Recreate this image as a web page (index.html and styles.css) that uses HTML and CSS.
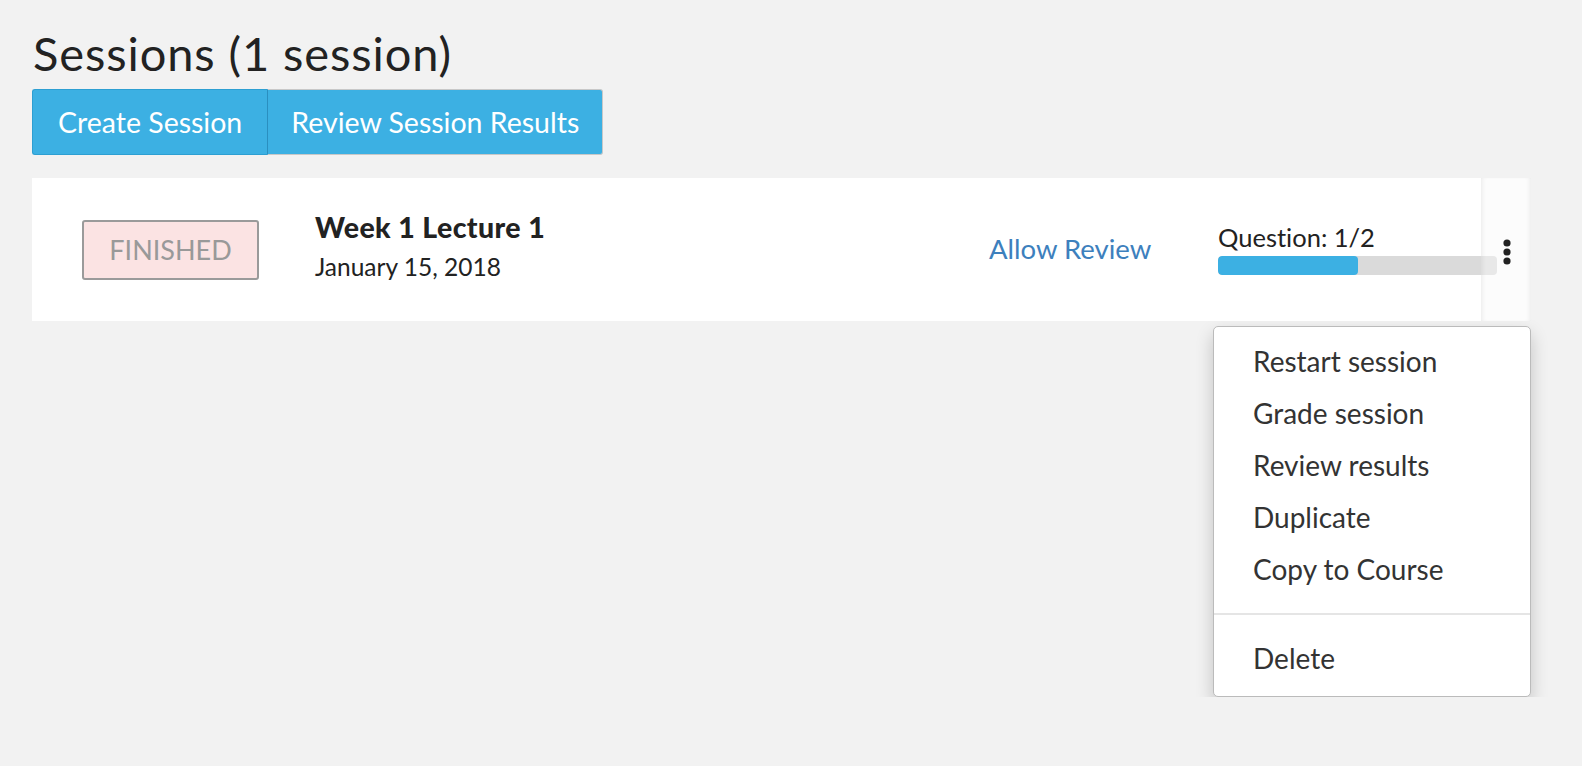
FILE: index.html
```html
<!DOCTYPE html>
<html>
<head>
<meta charset="utf-8">
<link rel="stylesheet" href="styles.css">
</head>
<body>
<div class="page">
  <h1 class="title">Sessions (1 session)</h1>
  <div class="btn-group">
    <button class="btn">Create Session</button>
    <button class="btn">Review Session Results</button>
  </div>
  <div class="card">
    <div class="status-col"><span class="badge">FINISHED</span></div>
    <div class="info">
      <div class="name">Week 1 Lecture 1</div>
      <div class="date">January 15, 2018</div>
    </div>
    <div class="review-col"><a class="review-link">Allow Review</a></div>
    <div class="progress-col">
      <div class="q">Question: 1/2</div>
      <div class="bar"><div class="fill" style="width:50%"></div></div>
    </div>
    <div class="kebab-col">
      <svg width="10" height="28" viewBox="0 0 10 28"><circle cx="5" cy="5" r="3.6" fill="#222"/><circle cx="5" cy="14" r="3.6" fill="#222"/><circle cx="5" cy="23" r="3.6" fill="#222"/></svg>
    </div>
  </div>
  <div class="options-row">
    <div class="options">
      <div class="opt">Restart session</div>
      <div class="opt">Grade session</div>
      <div class="opt">Review results</div>
      <div class="opt">Duplicate</div>
      <div class="opt">Copy to Course</div>
      <div class="sep"></div>
      <div class="opt">Delete</div>
    </div>
  </div>
</div>
</body>
</html>
```
FILE: styles.css
```css
* { box-sizing: border-box; }
html, body { margin: 0; padding: 0; background: #f2f2f2; }
body { font-family: Lato, "Noto Sans", sans-serif; color: #222; font-variant-ligatures: none; }
.page { padding: 24px 0 0 32px; width: 1582px; }
.title { font-size: 47px; font-weight: 400; margin: 0 0 0 1px; line-height: 58px; color: #222; letter-spacing: 0.9px; }
.btn-group { display: flex; margin-top: 7px; }
.btn {
  font-family: inherit; font-size: 28.5px; color: #fff; background: #3cb0e3;
  border: 1px solid #2d9fd2; height: 66px; padding: 0 25px 0 25px; cursor: pointer;
  font-variant-ligatures: none;
}
.btn:first-child { border-radius: 3px 0 0 3px; border-right: 1px solid #2a8fc0; }
.btn:last-child { border-radius: 0 3px 3px 0; border-left: 0; border-color: #c8c8c8; padding: 0 23px 0 23px; }
.card {
  position: relative; margin-top: 23px; background: #fff; height: 143px;
  display: flex; align-items: center; width: 1499px;
}
.status-col { width: 283px; padding-left: 50px; flex-shrink: 0; }
.badge {
  display: block; width: 177px; height: 60px; line-height: 56px; text-align: center;
  background: #fbe3e3; border: 2px solid #9a9a9a; border-radius: 3px; color: #999; font-size: 27px;
}
.info { flex: 1; }
.name { font-weight: 900; font-size: 28.5px; line-height: 32px; margin-top: -7px; letter-spacing: 0.4px; }
.date { font-size: 24.5px; line-height: 30px; margin-top: 9px; }
.review-col { width: 229px; flex-shrink: 0; padding-bottom: 3px; }
.review-link { color: #3d80bd; font-size: 27.5px; }
.progress-col { width: 313px; flex-shrink: 0; margin-top: -1px; }
.q { font-size: 25.5px; line-height: 28px; }
.bar { height: 19px; background: #dadada; border-radius: 4px; margin-top: 5px; width: 279px; overflow: hidden; }
.fill { height: 100%; background: #3cb0e3; border-radius: 4px; }
.kebab-col {
  position: absolute; right: 0; top: 0; bottom: 0; width: 50px;
  background: rgba(248,248,248,0.45);
  box-shadow: inset 4px 0 5px -3px rgba(0,0,0,0.08), inset -4px 0 5px -3px rgba(0,0,0,0.08);
  display: flex; align-items: center; justify-content: center; padding-top: 5px; padding-left: 1px;
}
.options-row { width: 1499px; display: flex; justify-content: flex-end; margin-top: 5px; }
.options {
  width: 318px;
  background: #fff; border: 1px solid #bbb; border-radius: 5px;
  box-shadow: 0 8px 18px rgba(0,0,0,0.2); padding: 8px 0 12px;
}
.opt { font-size: 28px; line-height: 52px; padding-left: 39px; color: #333; }
.sep { height: 2px; background: #e5e5e5; margin: 18px 0 17px; }
```
